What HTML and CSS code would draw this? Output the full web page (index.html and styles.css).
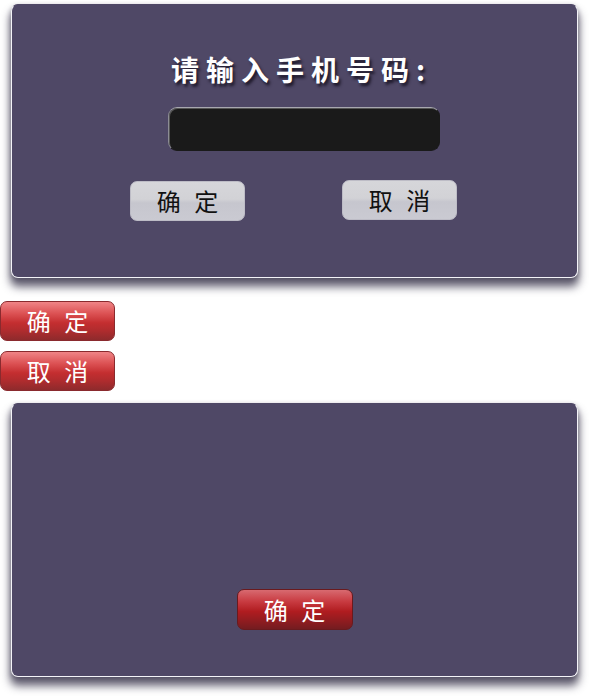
FILE: index.html
```html
<!DOCTYPE html>
<html>
<head>
<meta charset="utf-8">
<link rel="stylesheet" href="styles.css">
</head>
<body>
<div class="panel panel-top">
  <h1 class="title">请输入手机号码:</h1>
  <div class="field"></div>
  <div class="actions">
    <button class="btn btn-gray btn-ok">确 定</button>
    <button class="btn btn-gray btn-cancel">取 消</button>
  </div>
</div>
<button class="btn btn-red btn-solo">确 定</button>
<button class="btn btn-red btn-solo">取 消</button>
<div class="panel panel-bottom">
  <button class="btn btn-dark-red">确 定</button>
</div>
</body>
</html>
```

FILE: styles.css
```css
html, body {
  margin: 0;
  padding: 0;
  background: #ffffff;
  font-family: "Noto Sans CJK SC", "Noto Sans", sans-serif;
}

body {
  min-height: 700px;
}

.panel {
  box-sizing: border-box;
  width: 567px;
  height: 274px;
  margin: 4px 12px 0 11px;
  background: #4f4866;
  border: 1px solid #f4f4f8;
  border-top-color: #4f4866;
  border-radius: 7px;
  box-shadow: 0 8px 9px 1px rgba(40, 35, 60, 0.7), 0 2px 5px rgba(40, 35, 60, 0.35);
}

.panel-top {
  display: flex;
  flex-direction: column;
  align-items: center;
  padding-top: 44px;
}

.title {
  margin: 0 0 0 14px;
  color: #ffffff;
  font-size: 28px;
  font-weight: 700;
  line-height: 40px;
  letter-spacing: 7px;
  text-shadow: 2px 3px 3px rgba(20, 15, 30, 0.85);
}

.field {
  box-sizing: border-box;
  width: 272px;
  height: 44px;
  margin-top: 18px;
  margin-left: 19px;
  background: #1a1a1a;
  border-radius: 9px;
  border: 1px solid #1a1a1a;
  border-top-color: #a8a8b0;
  border-left-color: #8c8c94;
  box-shadow: inset 1px 1px 0 #555;
}

.actions {
  width: 327px;
  display: flex;
  justify-content: space-between;
  margin-top: 29px;
  margin-left: -2px;
}

.btn {
  box-sizing: border-box;
  width: 115px;
  height: 40px;
  padding: 0;
  border-radius: 7px;
  font-family: "Noto Sans CJK SC", "Noto Sans", sans-serif;
  font-size: 24px;
  letter-spacing: 4px;
  text-indent: 4px;
  line-height: 36px;
  cursor: pointer;
}

.btn-gray {
  color: #111111;
  border: 1px solid #bdbcc6;
  background: linear-gradient(#d6d6da 0%, #d2d2d6 45%, #c6c6ce 55%, #cacad2 100%);
}

.btn-ok {
  margin-top: 1px;
}

.btn-cancel {
  margin-top: 0;
}

.btn-red {
  display: block;
  color: #ffffff;
  border: 1px solid #8a2a2e;
  background: linear-gradient(#f08486 0%, #dc5254 30%, #c42e30 55%, #b02c2e 75%, #8e2a2c 100%);
}

.btn-solo {
  margin-top: 23px;
}

.btn-solo + .btn-solo {
  margin-top: 10px;
}

.panel-bottom {
  margin-top: 12px;
  display: flex;
  justify-content: center;
  align-items: flex-start;
  padding-top: 185px;
}

.btn-dark-red {
  width: 116px;
  height: 41px;
  color: #ffffff;
  border: 1px solid #6a1a1e;
  background: linear-gradient(#d86a70 0%, #c83a40 30%, #b01c20 55%, #961c20 75%, #741c20 100%);
}
```
